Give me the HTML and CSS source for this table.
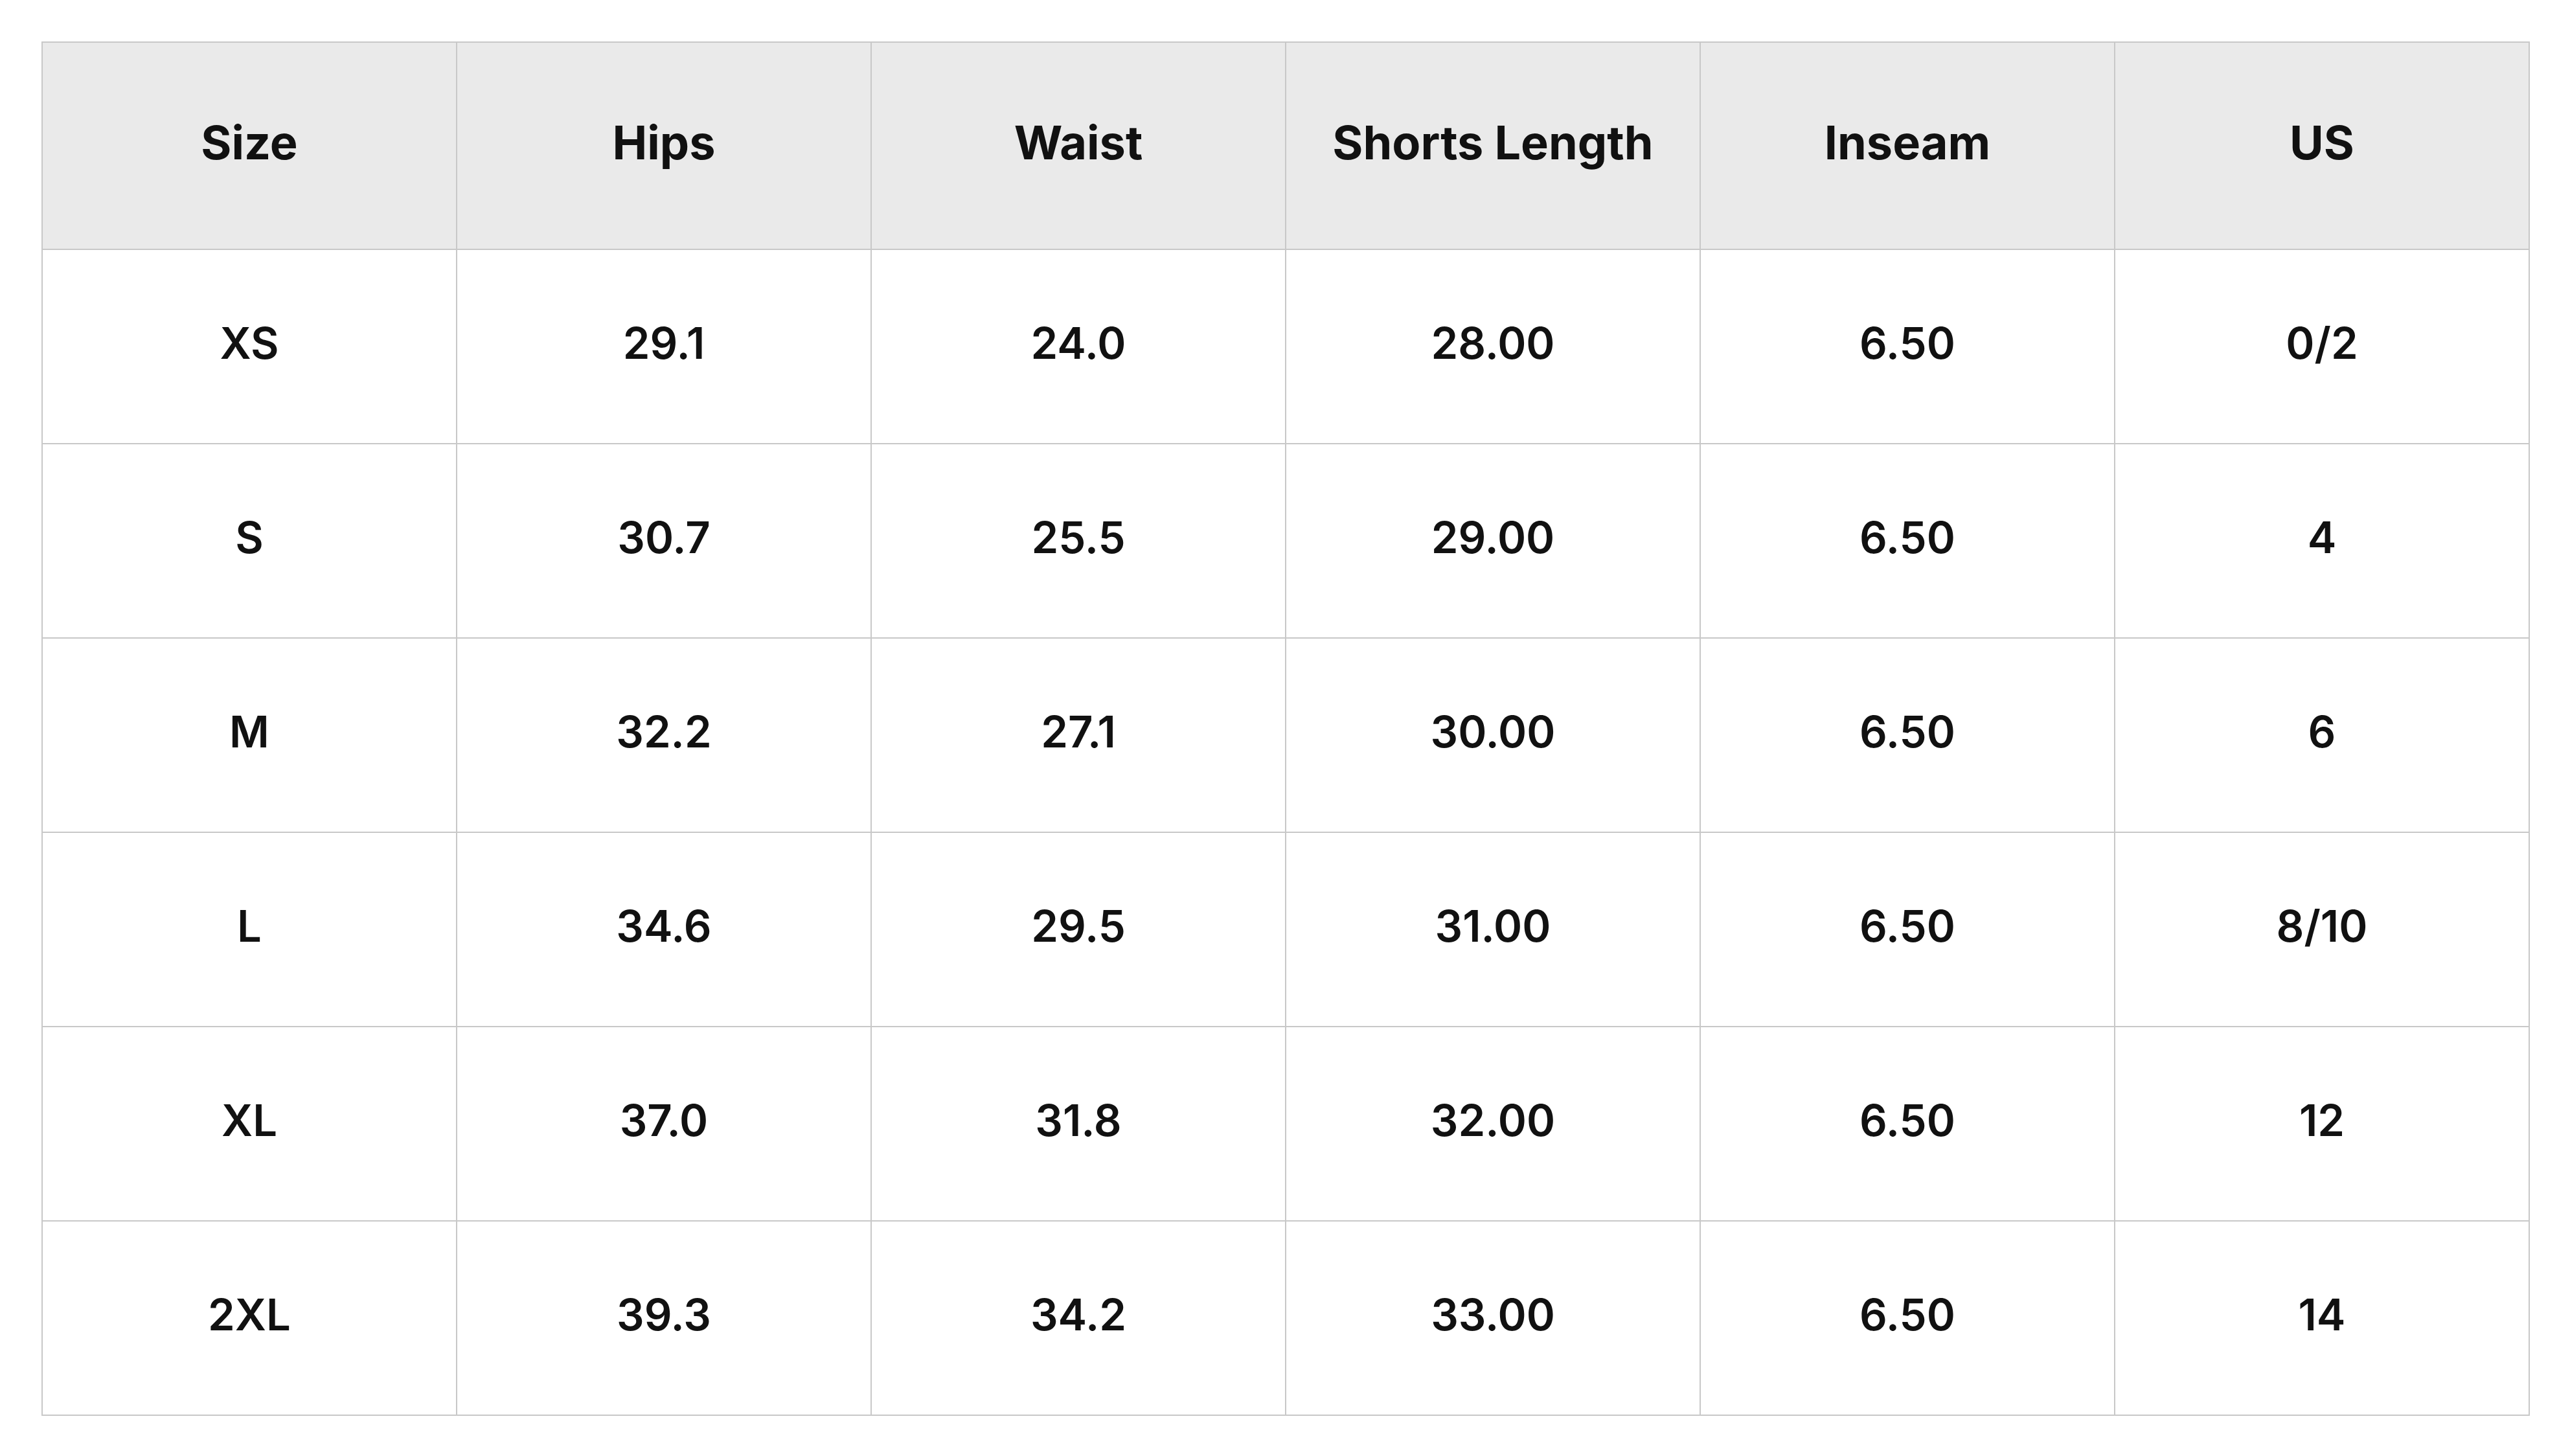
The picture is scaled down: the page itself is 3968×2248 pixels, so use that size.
FILE: index.html
```html
<!DOCTYPE html>
<html lang="en">
<head>
<meta charset="utf-8">
<title>Size Chart</title>
<link rel="stylesheet" href="styles.css">
</head>
<body>
<div class="wrap">
<table class="size-chart">
  <thead>
    <tr>
      <th>Size</th><th>Hips</th><th>Waist</th><th>Shorts Length</th><th>Inseam</th><th>US</th>
    </tr>
  </thead>
  <tbody>
    <tr><td>XS</td><td>29.1</td><td>24.0</td><td>28.00</td><td>6.50</td><td>0/2</td></tr>
    <tr><td>S</td><td>30.7</td><td>25.5</td><td>29.00</td><td>6.50</td><td>4</td></tr>
    <tr><td>M</td><td>32.2</td><td>27.1</td><td>30.00</td><td>6.50</td><td>6</td></tr>
    <tr><td>L</td><td>34.6</td><td>29.5</td><td>31.00</td><td>6.50</td><td>8/10</td></tr>
    <tr><td>XL</td><td>37.0</td><td>31.8</td><td>32.00</td><td>6.50</td><td>12</td></tr>
    <tr><td>2XL</td><td>39.3</td><td>34.2</td><td>33.00</td><td>6.50</td><td>14</td></tr>
  </tbody>
</table>
</div>
</body>
</html>
```
FILE: styles.css
```css
html, body {
  margin: 0;
  padding: 0;
  background: #ffffff;
}
.wrap {
  padding: 64px 62px 64px 64px;
}
.size-chart {
  width: 100%;
  border-collapse: collapse;
  table-layout: fixed;
  font-family: Inter, Roboto, "Liberation Sans", sans-serif;
  color: #111111;
}
.size-chart th,
.size-chart td {
  border: 2px solid #c8c8c8;
  text-align: center;
  vertical-align: middle;
  padding: 0 0 10px 0;
  line-height: 1.2;
}
.size-chart th {
  background: #eaeaea;
  font-size: 72px;
  font-weight: 700;
  height: 308px;
}
.size-chart td {
  font-size: 67px;
  font-weight: 600;
  height: 288px;
}
```
